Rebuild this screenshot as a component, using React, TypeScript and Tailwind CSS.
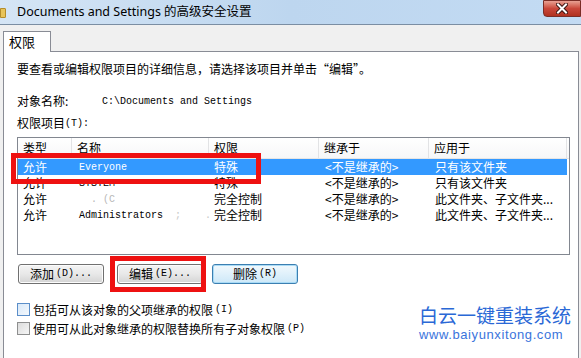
import React from "react";

const cjk = "font-['Noto_Sans_CJK_SC','Noto_Sans',sans-serif]";
const mono = "font-['Liberation_Mono','Noto_Sans_CJK_SC',monospace]";

const cols = [
  { label: "类型", w: "w-[54px]" },
  { label: "名称", w: "w-[137px]" },
  { label: "权限", w: "w-[110px]" },
  { label: "继承于", w: "w-[110px]" },
  { label: "应用于", w: "w-[138px]" },
];

const rows = [
  { type: "允许", name: "Everyone", perm: "特殊", from: "<不是继承的>", apply: "只有该文件夹", selected: true },
  { type: "允许", name: "SYSTEM", perm: "特殊", from: "<不是继承的>", apply: "只有该文件夹" },
  { type: "允许", name: "  . (C", perm: "完全控制", from: "<不是继承的>", apply: "此文件夹、子文件夹...", faint: true },
  { type: "允许", name: "Administrators", perm: "完全控制", from: "<不是继承的>", apply: "此文件夹、子文件夹..." },
];

function Button({ label, hot, focused }: { label: string; hot: string; focused?: boolean }) {
  return (
    <div
      className={
        "w-[86px] h-[20px] rounded-[3px] border flex items-center justify-center gap-[2px] text-[12px] text-black " +
        (focused
          ? "border-[#3c7fb1] bg-gradient-to-b from-[#f2f9fd] to-[#cde8f8] shadow-[inset_0_0_0_1px_#a9dbf6]"
          : "border-[#707070] bg-gradient-to-b from-[#f4f4f4] via-[#e8e8e8] to-[#d4d4d4] shadow-[inset_0_0_0_1px_#fcfcfc]")
      }
    >
      <span className={cjk + " leading-none"}>{label}</span>
      <span className={mono + " text-[10px] leading-none"}>{hot}</span>
    </div>
  );
}

function Check({ label, hot, blue }: { label: string; hot: string; blue?: boolean }) {
  return (
    <div className="flex items-center h-[19px]">
      <div
        className={
          "w-[13px] h-[13px] border " +
          (blue ? "border-[#5b8ec9] bg-gradient-to-br from-[#d9e9f9] to-[#f4f8fc]" : "border-[#8e8f8f] bg-gradient-to-br from-[#dcdcdc] to-[#f6f6f6]")
        }
      />
      <span className={cjk + " ml-[3px] text-[12px] text-black leading-none"}>{label}</span>
      <span className={mono + " ml-[2px] text-[10px] text-black leading-none"}>{hot}</span>
    </div>
  );
}

export default function App() {
  return (
    <div className="relative w-[581px] h-[358px] overflow-hidden bg-[#f0f0f0] flex flex-col">
      {/* title bar */}
      <div className="h-[25px] flex items-center bg-gradient-to-r from-[#d5e5f5] via-[#bdd6ef] to-[#c3dbf3] border-b border-[#7b8ea3] relative">
        <div className="w-[6px] h-[10px] bg-[#e8c45a] border border-[#b58d2a] rounded-r-[1px] mt-[2px]" />
        <span className="ml-[11px] text-[12.5px] text-black font-['Noto_Sans','Noto_Sans_CJK_SC',sans-serif]">
          Documents and Settings 的高级安全设置
        </span>
        <div className="absolute right-0 top-0 w-[38px] h-[17px] rounded-bl-[4px] border border-[#7a2d26] bg-gradient-to-b from-[#e8a093] via-[#c9473a] to-[#b0311f] flex items-center justify-center">
          <svg width="12" height="11" viewBox="0 0 12 11">
            <path d="M2 1.5 L10 9.5 M10 1.5 L2 9.5" stroke="#3b1410" strokeWidth="4" strokeLinecap="square" />
            <path d="M2 1.5 L10 9.5 M10 1.5 L2 9.5" stroke="#ffffff" strokeWidth="2" strokeLinecap="square" />
          </svg>
        </div>
      </div>

      {/* tab strip */}
      <div className="h-[26px] flex items-end pl-[3px]">
        <div className={cjk + " w-[48px] h-[21px] bg-white border border-b-0 border-[#898c95] text-[13px] text-black pl-[5px] leading-[20px] relative top-[1px]"}>
          权限
        </div>
      </div>

      {/* tab panel */}
      <div className="flex-1 ml-[3px] mr-[2px] bg-white border border-b-0 border-[#898c95] pl-[13px] pr-[8px] pt-[9px] flex flex-col">
        <div className={cjk + " text-[12px] text-black h-[16px] leading-[16px]"}>
          要查看或编辑权限项目的详细信息，请选择该项目并单击“编辑”。
        </div>
        <div className="flex items-center h-[16px] mt-[16px] text-[12px] text-black">
          <span className={cjk + " w-[85px]"}>对象名称:</span>
          <span className={mono + " text-[10px]"}>C:\Documents and Settings</span>
        </div>
        <div className="flex items-center h-[16px] mt-[6px] text-black">
          <span className={cjk + " text-[12px]"}>权限项目</span>
          <span className={mono + " text-[10px]"}>(T):</span>
        </div>

        {/* list */}
        <div className="mt-[6px] w-[553px] h-[118px] border border-[#828790] bg-white flex flex-col">
          <div className="flex h-[21px] border-b border-[#e5e5e5] bg-gradient-to-b from-white to-[#f6f7f8]">
            {cols.map((c) => (
              <div key={c.label} className={c.w + " border-r border-[#e2e3e5] pl-[5px] flex items-center"}>
                <span className={cjk + " text-[12px] text-black"}>{c.label}</span>
              </div>
            ))}
          </div>
          {rows.map((r, i) => (
            <div
              key={i}
              className={"flex h-[16px] items-center w-[549px] " + (r.selected ? "bg-[#3399ff] text-white" : "text-black")}
            >
              <div className={cjk + " w-[54px] pl-[5px] text-[12px]"}>{r.type}</div>
              <div className={mono + " w-[137px] pl-[7px] text-[10px] whitespace-pre " + (r.faint ? "text-[#b8b8b8]" : "")}>
                {r.name}
                {r.name === "Administrators" && <span className="text-[#c8c8c8]">  ;    .</span>}
              </div>
              <div className={cjk + " w-[110px] pl-[5px] text-[12px]"}>{r.perm}</div>
              <div className={cjk + " w-[110px] pl-[6px] text-[12px]"}>{r.from}</div>
              <div className={cjk + " w-[138px] pl-[6px] text-[12px]"}>{r.apply}</div>
            </div>
          ))}
        </div>

        {/* buttons */}
        <div className="flex mt-[9px] gap-[13px] ml-[1px]">
          <Button label="添加" hot="(D)..." />
          <Button label="编辑" hot="(E)..." />
          <div className="-ml-[4px]">
            <Button label="删除" hot="(R)" focused />
          </div>
        </div>

        <div className="mt-[16px] flex flex-col">
          <Check label="包括可从该对象的父项继承的权限" hot="(I)" blue />
          <Check label="使用可从此对象继承的权限替换所有子对象权限" hot="(P)" />
        </div>
      </div>

      {/* red highlight boxes */}
      <div className="absolute left-[11px] top-[153px] w-[250px] h-[31px] border-[5px] border-[#ee1111]" />
      <div className="absolute left-[110px] top-[256px] w-[96px] h-[36px] border-[5px] border-[#ee1111]" />

      {/* watermark */}
      <div className="absolute left-[419px] top-[305px] flex flex-col items-start gap-[3px]">
        <span className={cjk + " text-[19px] leading-[20px] text-[#2a68d6]"}>白云一键重装系统</span>
        <span className="font-['Liberation_Sans',sans-serif] text-[13px] leading-[14px] tracking-[0.6px] text-[#3a74dc]">
          www.baiyunxitong.com
        </span>
      </div>
    </div>
  );
}
